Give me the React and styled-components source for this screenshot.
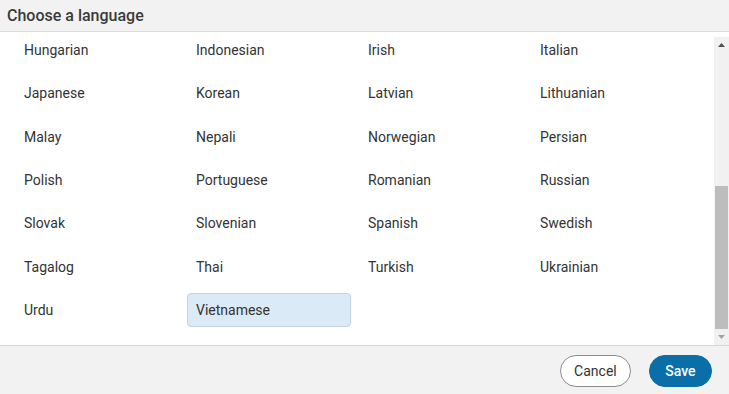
import React from "react";
import styled, { createGlobalStyle } from "styled-components";

const languages = [
  "Hungarian", "Indonesian", "Irish", "Italian",
  "Japanese", "Korean", "Latvian", "Lithuanian",
  "Malay", "Nepali", "Norwegian", "Persian",
  "Polish", "Portuguese", "Romanian", "Russian",
  "Slovak", "Slovenian", "Spanish", "Swedish",
  "Tagalog", "Thai", "Turkish", "Ukrainian",
  "Urdu", "Vietnamese",
];

const GlobalStyle = createGlobalStyle`
  html, body {
    margin: 0;
    padding: 0;
    background: #fff;
    font-family: Roboto, "Liberation Sans", Arial, sans-serif;
    color: #333;
  }
`;

const App = () => {
  return (
    <>
      <GlobalStyle />
      <Dialog>
        <Header>Choose a language</Header>
        <Body>
          <Grid>
            {languages.map((lang) => (
              <Option key={lang} $selected={lang === "Vietnamese"}>
                {lang}
              </Option>
            ))}
          </Grid>
          <Scrollbar>
            <Arrow>
              <svg width="7" height="4" viewBox="0 0 7 4">
                <path d="M0 4 L3.5 0 L7 4 Z" fill="#505050" />
              </svg>
            </Arrow>
            <Track>
              <Thumb />
            </Track>
            <Arrow>
              <svg width="7" height="4" viewBox="0 0 7 4">
                <path d="M0 0 L3.5 4 L7 0 Z" fill="#a3a3a3" />
              </svg>
            </Arrow>
          </Scrollbar>
        </Body>
        <Footer>
          <Button>Cancel</Button>
          <Button $primary>Save</Button>
        </Footer>
      </Dialog>
    </>
  );
};

const Dialog = styled.div`
  width: 729px;
  height: 394px;
  display: flex;
  flex-direction: column;
  background: #fff;
  overflow: hidden;
`;

const Header = styled.div`
  height: 31px;
  flex-shrink: 0;
  display: flex;
  align-items: center;
  padding: 0 7px;
  background: #f2f2f2;
  border-bottom: 1px solid #dcdcdc;
  font-size: 16px;
  font-weight: 500;
  color: #3a3a3a;
`;

const Body = styled.div`
  flex: 1;
  min-height: 0;
  display: flex;
`;

const Grid = styled.div`
  flex: 1;
  align-self: flex-start;
  display: grid;
  grid-template-columns: repeat(4, 164px);
  grid-auto-rows: 34px;
  column-gap: 8px;
  row-gap: 9.35px;
  padding: 1px 0 0 15px;
`;

const Option = styled.div`
  display: flex;
  align-items: center;
  padding: 0 8px;
  font-size: 14px;
  color: #333;
  border-radius: 4px;
  border: 1px solid ${(p) => (p.$selected ? "#c3d3e0" : "transparent")};
  background: ${(p) => (p.$selected ? "#dbeaf7" : "transparent")};
  white-space: nowrap;
`;

const Scrollbar = styled.div`
  width: 15px;
  margin-top: 5px;
  display: flex;
  flex-direction: column;
  background: #f1f1f1;
`;

const Arrow = styled.div`
  height: 16px;
  flex-shrink: 0;
  display: flex;
  align-items: center;
  justify-content: center;
`;

const Track = styled.div`
  flex: 1;
  display: flex;
  flex-direction: column;
  justify-content: flex-end;
  padding: 0 1px;
`;

const Thumb = styled.div`
  height: 143px;
  background: #bdbdbd;
`;

const Footer = styled.div`
  height: 49px;
  flex-shrink: 0;
  box-sizing: border-box;
  display: flex;
  align-items: center;
  justify-content: flex-end;
  gap: 18px;
  padding: 2px 17px 0 0;
  background: #f2f2f2;
  border-top: 1px solid #d6d6d6;
`;

const Button = styled.button`
  height: 32px;
  padding: 0 ${(p) => (p.$primary ? "15.5px" : "13px")};
  border-radius: 16px;
  font-family: Roboto, "Liberation Sans", Arial, sans-serif;
  font-size: 14px;
  font-weight: ${(p) => (p.$primary ? 500 : 400)};
  color: ${(p) => (p.$primary ? "#fff" : "#333")};
  background: ${(p) => (p.$primary ? "#0a6ea8" : "#fff")};
  border: 1px solid ${(p) => (p.$primary ? "#0a6ea8" : "#8c8c8c")};
  cursor: pointer;
`;

export default App;
